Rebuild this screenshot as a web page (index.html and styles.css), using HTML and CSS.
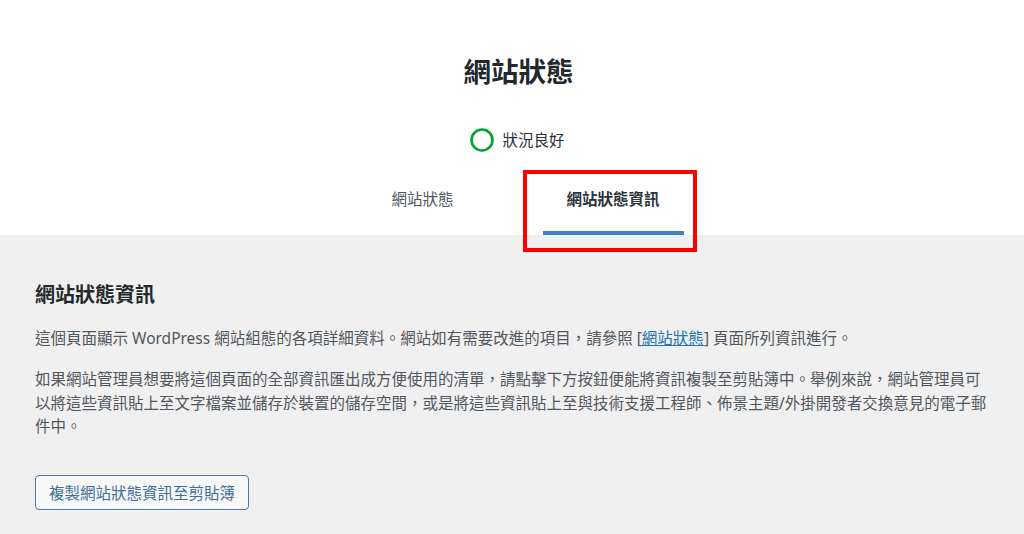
FILE: index.html
```html
<!DOCTYPE html>
<html lang="zh-Hant">
<head>
  <meta charset="UTF-8" />
  <title>網站狀態資訊</title>
  <link rel="stylesheet" href="styles.css">
</head>
<body>

  <header class="health-header">
    <h1>網站狀態</h1>

    <div class="health-status">
      <svg class="status-ring" width="24" height="24" viewBox="0 0 24 24">
        <circle cx="12" cy="12" r="10.5" fill="none" stroke="#00a32a" stroke-width="2.6" />
      </svg>
      <span>狀況良好</span>
    </div>

    <nav class="health-tabs">
      <a class="health-tab" href="#">網站狀態</a>
      <a class="health-tab active" href="#">網站狀態資訊
        <span class="highlight-box"></span>
      </a>
    </nav>
  </header>

  <main class="health-body">
    <h2>網站狀態資訊</h2>
    <p>這個頁面顯示 WordPress 網站組態的各項詳細資料。網站如有需要改進的項目，請參照 [<a href="#">網站狀態</a>] 頁面所列資訊進行。</p>
    <p>如果網站管理員想要將這個頁面的全部資訊匯出成方便使用的清單，請點擊下方按鈕便能將資訊複製至剪貼簿中。舉例來說，網站管理員可以將這些資訊貼上至文字檔案並儲存於裝置的儲存空間，或是將這些資訊貼上至與技術支援工程師、佈景主題/外掛開發者交換意見的電子郵件中。</p>

    <button class="copy-button" type="button">複製網站狀態資訊至剪貼簿</button>
  </main>

</body>
</html>
```

FILE: styles.css
```css
html, body {
  margin: 0;
  padding: 0;
  font-family: "Noto Sans", "Noto Sans CJK TC", sans-serif;
  background: #f0f0f1;
  color: #50575e;
  font-size: 15.5px;
}

.health-header {
  background: #fff;
  height: 235px;
  box-sizing: border-box;
  padding-top: 52px;
  text-align: center;
}

.health-header h1 {
  margin: 0;
  padding-left: 13px;
  font-size: 27.5px;
  line-height: 40px;
  font-weight: 700;
  color: #23282d;
}

.health-status {
  display: flex;
  justify-content: center;
  align-items: center;
  gap: 8px;
  margin-top: 36px;
  margin-left: 11px;
  height: 24px;
  color: #2c3338;
}

.health-status span {
  line-height: 24px;
}

.health-tabs {
  display: flex;
  justify-content: center;
  gap: 38px;
  margin-top: 18px;
}

.health-tab {
  position: relative;
  display: block;
  padding: 17px 51px 20px;
  line-height: 24px;
  color: #50575e;
  text-decoration: none;
  border-bottom: 4px solid transparent;
}

.health-tab.active {
  padding: 17px 24px 20px;
  font-weight: 700;
  color: #2c3338;
  border-bottom-color: #3a84c2;
}

.highlight-box {
  position: absolute;
  left: -20px;
  top: 0;
  right: -13px;
  bottom: -21px;
  border: 4px solid #ff0000;
}

.health-body {
  padding: 46px 35px 0;
}

.health-body h2 {
  margin: 0 0 18px;
  font-size: 20px;
  line-height: 28px;
  font-weight: 700;
  color: #23282d;
}

.health-body p {
  margin: 0 0 18px;
  line-height: 23.4px;
}

.health-body p a {
  color: #2271b1;
}

.copy-button {
  margin-top: 18px;
  height: 35px;
  padding: 0 13px;
  font-family: inherit;
  font-size: 15.5px;
  color: #3f6f99;
  background: #f6f7f7;
  border: 1px solid #4a7ba6;
  border-radius: 4px;
  cursor: pointer;
}
```
